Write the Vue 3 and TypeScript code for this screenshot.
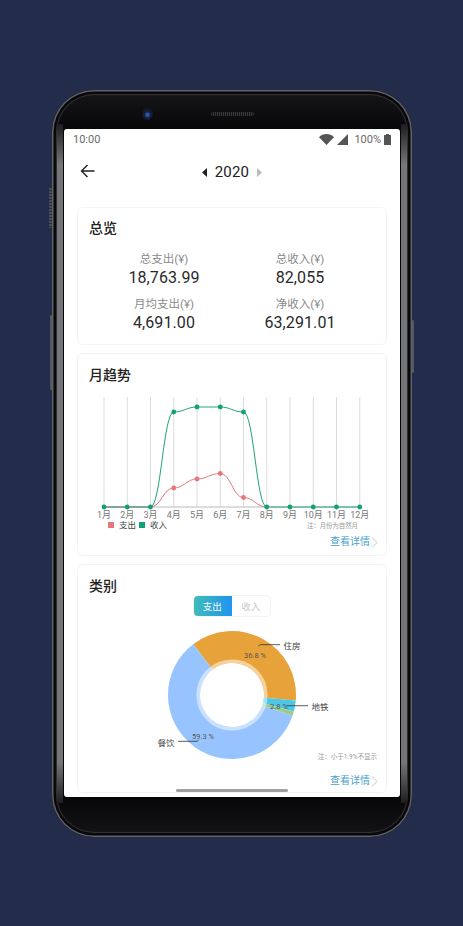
<script setup lang="ts">
import { computed } from 'vue'

const stats = [
  { label: '总支出(¥)', value: '18,763.99' },
  { label: '总收入(¥)', value: '82,055' },
  { label: '月均支出(¥)', value: '4,691.00' },
  { label: '净收入(¥)', value: '63,291.01' },
]

const X0 = 26
const STEP = 23.25
const xs = Array.from({ length: 12 }, (_, i) => X0 + STEP * i)
const BASE = 114
const income = [114, 114, 114, 19, 14, 14, 19, 114, 114, 114, 114, 114].map((y, i) => ({ x: xs[i], y }))
const expense = [114, 114, 114, 95, 86, 80.5, 104.5, 114].map((y, i) => ({ x: xs[i], y }))

function smooth(pts: { x: number; y: number }[]): string {
  let d = `M${pts[0].x} ${pts[0].y}`
  for (let i = 1; i < pts.length; i++) {
    const a = pts[i - 1]
    const b = pts[i]
    const k = (b.x - a.x) * 0.45
    d += ` C${a.x + k} ${a.y} ${b.x - k} ${b.y} ${b.x} ${b.y}`
  }
  return d
}
const incomePath = computed(() => smooth(income))
const expensePath = computed(() => smooth(expense))

const CX = 154
const CY = 78
const R = 64
const RI = 32
function polar(r: number, deg: number): string {
  const a = (deg - 90) * Math.PI / 180
  return `${(CX + r * Math.cos(a)).toFixed(2)} ${(CY + r * Math.sin(a)).toFixed(2)}`
}
function arc(from: number, to: number): string {
  const large = to - from > 180 ? 1 : 0
  return `M${polar(R, from)} A${R} ${R} 0 ${large} 1 ${polar(R, to)} L${polar(RI, to)} A${RI} ${RI} 0 ${large} 0 ${polar(RI, from)} Z`
}
const slices = [
  { from: -37.4, to: 95, color: '#E8A23A' },
  { from: 95, to: 105, color: '#4EC7E6' },
  { from: 105, to: 109, color: '#9CCB8C' },
  { from: 109, to: 322.6, color: '#97C4FF' },
].map(s => ({ d: arc(s.from, s.to), color: s.color }))
</script>

<template>
  <div class="page">
    <div class="phone">
      <span class="btn btn-a"></span>
      <span class="btn btn-b"></span>
      <span class="btn btn-c"></span>
      <span class="edge edge-l"></span>
      <span class="edge edge-r"></span>
      <div class="earpiece">
        <span class="camera"></span>
        <span class="speaker"></span>
      </div>
      <div class="screen">
        <div class="status">
          <span>10:00</span>
          <div class="status-right">
            <svg width="15" height="11" viewBox="0 0 15 11"><path d="M0 3.2C2 1.2 4.6 0 7.5 0s5.5 1.2 7.5 3.2L7.5 11z" fill="#555" /></svg>
            <svg class="signal" width="11" height="11" viewBox="0 0 11 11"><path d="M11 0v11H0z" fill="#555" /></svg>
            <span class="pct">100%</span>
            <svg width="7" height="11" viewBox="0 0 7 11"><path d="M2 0h3v1h2v10H0V1h2z" fill="#555" /></svg>
          </div>
        </div>
        <div class="nav">
          <svg class="back" width="15" height="14" viewBox="0 0 15 14"><path d="M14.5 7H1.5M7.5 1L1.5 7l6 6" fill="none" stroke="#222" stroke-width="1.4" /></svg>
          <div class="year">
            <svg width="5" height="9" viewBox="0 0 5 9"><path d="M5 0v9L0 4.5z" fill="#222" /></svg>
            <span>2020</span>
            <svg width="5" height="9" viewBox="0 0 5 9"><path d="M0 0v9l5-4.5z" fill="#bbb" /></svg>
          </div>
        </div>
        <div class="cards">
          <section class="card card-total">
            <h2>总览</h2>
            <div class="stats">
              <div v-for="s in stats" :key="s.label" class="stat">
                <span class="stat-label">{{ s.label }}</span>
                <span class="stat-value">{{ s.value }}</span>
              </div>
            </div>
          </section>

          <section class="card card-trend">
            <h2>月趋势</h2>
            <svg class="chart" width="308" height="139" viewBox="0 0 308 139">
              <line v-for="x in xs" :key="x" :x1="x" :x2="x" y1="4" :y2="BASE" stroke="#dcdcdc" stroke-width="1" />
              <line :x1="xs[0]" :x2="xs[11]" :y1="BASE" :y2="BASE" stroke="#bbb" stroke-width="1" />
              <path :d="expensePath" fill="none" stroke="#E5777C" stroke-width="1" />
              <path :d="incomePath" fill="none" stroke="#1FA27A" stroke-width="1" />
              <circle v-for="p in expense.slice(3, 7)" :key="p.x" :cx="p.x" :cy="p.y" r="2.4" fill="#E5777C" />
              <circle v-for="p in income" :key="p.x" :cx="p.x" :cy="p.y" r="2.4" fill="#12A075" />
              <text v-for="(x, i) in xs" :key="'m' + i" :x="x" y="125" class="month">{{ i + 1 }}月</text>
              <rect x="30" y="129" width="6" height="6" fill="#E5777C" />
              <text x="41" y="134.5" class="legend">支出</text>
              <rect x="61" y="129" width="6" height="6" fill="#12A075" />
              <text x="72" y="134.5" class="legend">收入</text>
              <text x="280" y="134.5" class="note">注：月份为自然月</text>
            </svg>
            <div class="detail">
              <span>查看详情</span>
              <svg width="7" height="11" viewBox="0 0 7 11"><path d="M1 .5l5 5-5 5" fill="none" stroke="#c4c4c4" /></svg>
            </div>
          </section>

          <section class="card card-cat">
            <h2>类别</h2>
            <div class="toggle">
              <span class="seg seg-on">支出</span>
              <span class="seg">收入</span>
            </div>
            <svg class="chart" width="308" height="145" viewBox="0 0 308 145">
              <path v-for="s in slices" :key="s.color" :d="s.d" :fill="s.color" />
              <circle :cx="CX" :cy="CY" r="33.8" fill="none" stroke="#fff" stroke-opacity=".5" stroke-width="3.6" />
              <path d="M180.5 29l2-1.3H202" fill="none" stroke="#333" stroke-width=".8" />
              <text x="214" y="32" class="pie-label">住房</text>
              <text x="177" y="41" class="pie-pct">36.8 %</text>
              <path d="M209 88.7H230" fill="none" stroke="#333" stroke-width=".8" />
              <text x="242" y="93" class="pie-label">地铁</text>
              <text x="201" y="91.5" class="pie-pct">2.8 %</text>
              <path d="M100 124.3H119l1.7-1.3" fill="none" stroke="#333" stroke-width=".8" />
              <text x="88" y="129" class="pie-label">餐饮</text>
              <text x="125" y="122" class="pie-pct">59.3 %</text>
              <text x="299" y="142" class="note note-end">注：小于1.9%不显示</text>
            </svg>
            <div class="detail detail-cat">
              <span>查看详情</span>
              <svg width="7" height="11" viewBox="0 0 7 11"><path d="M1 .5l5 5-5 5" fill="none" stroke="#c4c4c4" /></svg>
            </div>
          </section>
        </div>
        <span class="home"></span>
      </div>
    </div>
  </div>
</template>

<style>
html, body { margin: 0; background: #232d4b; }
</style>

<style scoped>
.page {
  width: 463px;
  height: 926px;
  overflow: hidden;
  padding: 90px 51px 0 52px;
  box-sizing: border-box;
  background: #232d4b;
  font-family: Roboto, "Noto Sans CJK SC", sans-serif;
}
.phone {
  position: relative;
  width: 360px;
  height: 747px;
  box-sizing: border-box;
  padding: 39px 12px 40px;
  border-radius: 42px;
  background: linear-gradient(#17171a 0, #050506 6%, #050506 94%, #141417 100%);
  box-shadow:
    inset 0 0 0 1.5px #606167,
    inset 0 0 0 4px #08080a,
    inset 0 0 1px 5px #36363a;
}
.edge {
  position: absolute;
  top: 34px;
  bottom: 34px;
  width: 6px;
  background: linear-gradient(#1c1c1f 0, #75767a 6%, #75767a 94%, #1c1c1f 100%);
}
.edge-l { left: 5px; }
.edge-r { right: 5px; }
.btn { position: absolute; background: #55565f; border-radius: 1px; }
.btn-a { left: -3px; top: 98px; width: 3px; height: 40px; background: repeating-linear-gradient(#4a4b55 0 2px, #2a2f44 2px 3px); }
.btn-b { left: -2px; top: 225px; width: 2px; height: 75px; }
.btn-c { right: -2px; top: 230px; width: 2px; height: 53px; }
.earpiece {
  position: absolute;
  top: 17px;
  left: 90px;
  display: flex;
  align-items: center;
  gap: 58px;
}
.camera {
  width: 11px;
  height: 13px;
  border-radius: 50%;
  background: radial-gradient(circle at 50% 60%, #2f55a8 0 1.5px, #15203f 3px, #14161f 6px);
}
.speaker {
  width: 43px;
  height: 4px;
  border-radius: 2px;
  background: repeating-linear-gradient(90deg, #3a3a3e 0 1px, #141416 1px 2px);
}
.screen {
  position: relative;
  width: 336px;
  height: 668px;
  overflow: hidden;
  background: #fff;
  border-radius: 3px;
  color: #222;
}
.status {
  height: 20px;
  padding: 0 9px;
  display: flex;
  align-items: center;
  justify-content: space-between;
  font-size: 11px;
  color: #6a6a6a;
}
.status-right { display: flex; align-items: center; }
.signal { margin-left: 3px; }
.pct { margin: 0 3px 0 6px; }
.nav {
  position: relative;
  height: 44px;
  display: flex;
  align-items: center;
  justify-content: center;
}
.back { position: absolute; left: 16px; top: 15px; }
.year {
  display: flex;
  align-items: center;
  gap: 8px;
  padding-top: 2px;
  font-size: 15px;
  letter-spacing: .2px;
  color: #222;
}
.cards {
  padding: 14px 13px 0;
  display: flex;
  flex-direction: column;
  gap: 8px;
}
.card {
  border: 1px solid #f3f3f3;
  border-radius: 6px;
  box-sizing: border-box;
  width: 310px;
  flex-shrink: 0;
}
.card h2 {
  margin: 0;
  padding: 11px 11px 0;
  font-size: 14px;
  font-weight: 500;
  line-height: 20px;
  color: #222;
}
.card-total { height: 138px; }
.card-total h2 { padding-top: 10px; }
.stats {
  display: grid;
  grid-template-columns: 136px 136px;
  justify-content: center;
  margin-top: 12px;
  row-gap: 7px;
}
.stat { display: flex; flex-direction: column; align-items: center; }
.stat-label { font-size: 11.5px; line-height: 18px; color: #8a8a8a; }
.stat-value { font-size: 16px; line-height: 20px; color: #2a2a2a; letter-spacing: .1px; }
.card-trend { height: 203px; }
.chart { display: block; }
.card-trend .chart { margin-top: 8px; }
.month { font-size: 9px; fill: #777; text-anchor: middle; }
.legend { font-size: 8.5px; fill: #444; }
.note { font-size: 6.4px; fill: #999; text-anchor: end; }
.detail {
  display: flex;
  justify-content: flex-end;
  align-items: center;
  gap: 1px;
  padding-right: 8px;
  margin-top: 3px;
  font-size: 10px;
  line-height: 14px;
  color: #4a9fcf;
}
.card-cat { height: 229px; }
.toggle {
  width: 78px;
  height: 22px;
  margin: -1px auto 0;
  display: flex;
  font-size: 9.5px;
  border-radius: 5px;
  overflow: hidden;
  box-sizing: border-box;
  border: 1px solid #f3f3f3;
}
.seg {
  flex: 1;
  display: flex;
  align-items: center;
  justify-content: center;
  color: #c8c8c8;
}
.seg-on {
  margin: -1px 0 -1px -1px;
  background: linear-gradient(90deg, #40bdb8, #2094ee);
  color: #fff;
}
.pie-label { font-size: 8.5px; fill: #444; text-anchor: middle; }
.pie-pct { font-size: 7.5px; fill: #555; text-anchor: middle; }
.note-end { font-size: 6.5px; }
.detail-cat { margin-top: 12px; }
.home {
  position: absolute;
  left: 112px;
  bottom: 5px;
  width: 112px;
  height: 3px;
  border-radius: 2px;
  background: #a0a0a0;
}
</style>
